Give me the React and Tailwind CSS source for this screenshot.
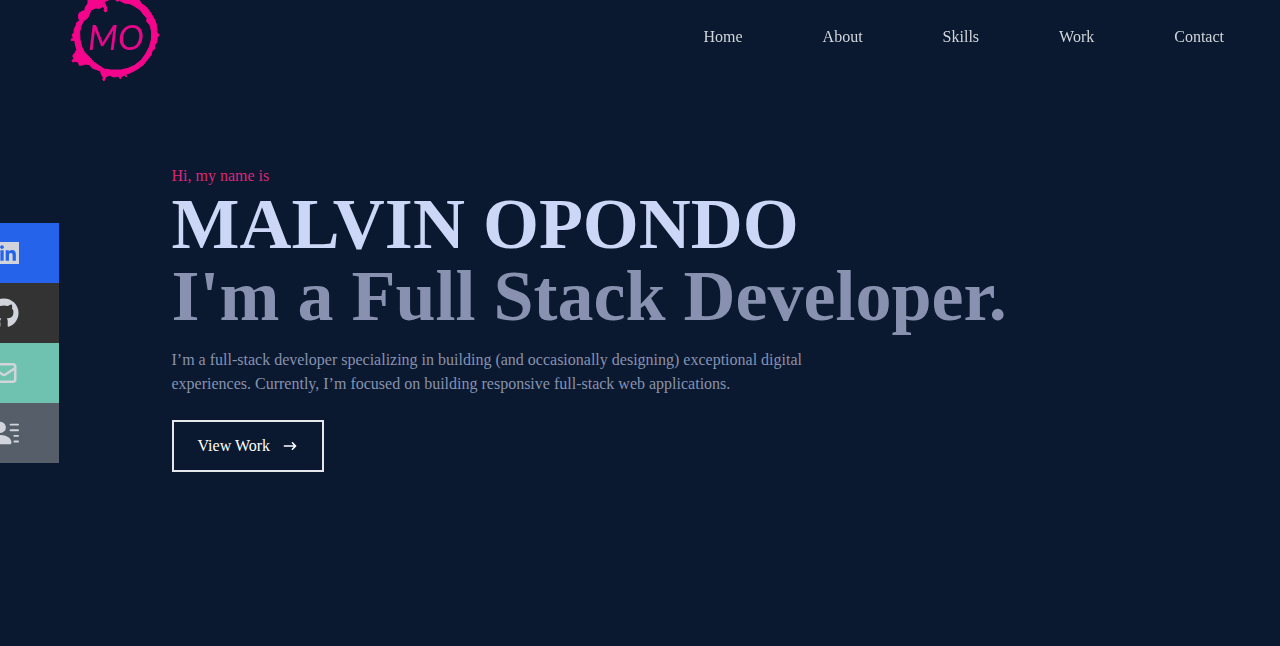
import { FaGithub } from "react-icons/fa";
import { HiArrowNarrowRight, HiOutlineMail } from "react-icons/hi";
import { BsFillPersonLinesFill } from "react-icons/bs";

const links = ["Home", "About", "Skills", "Work", "Contact"];

function LinkedInIcon({ className }) {
  return (
    <svg viewBox="0 0 448 512" fill="currentColor" className={className} aria-hidden="true">
      <path d="M0 32H448V480H0Zm135.4 384V202.2H69V416h66.5zm-33.2-243c21.3 0 38.5-17.2 38.5-38.5 0-21.2-17.3-38.5-38.5-38.5-21.3 0-38.5 17.3-38.5 38.5s17.2 38.5 38.5 38.5zm282.1 243V298.8c0-57.6-12.5-101.9-79.7-101.9-32.3 0-54 17.7-62.9 34.5h-.9v-29.2h-63.7V416h66.4V310.2c0-27.9 5.3-54.9 39.9-54.9 34 0 34.5 31.9 34.5 56.7v104h66.4z" />
    </svg>
  );
}

const socials = [
  { label: "LinkedIn", Icon: LinkedInIcon, color: "bg-[#2563eb]", size: "h-[30px] w-[22px]" },
  { label: "GitHub", Icon: FaGithub, color: "bg-[#333333]", size: "size-[30px]" },
  { label: "Email", Icon: HiOutlineMail, color: "bg-[#6fc2b0]", size: "size-[30px]" },
  { label: "Resume", Icon: BsFillPersonLinesFill, color: "bg-[#565f69]", size: "size-[30px]" },
];

function Logo() {
  return (
    <svg viewBox="0 -26 330 270" className="h-[90px] w-[110px]" role="img" aria-label="MO">
      <path
        fill="#f5058c"
        stroke="#f5058c"
        strokeWidth="3"
        strokeLinejoin="round"
        fillRule="evenodd"
        d="M84 -8 L100 -20 L150 -30 L200 -26 L236 -4 L245 10 L258 18 L270 34 L280 50 L288 68 L291 88 L290 94 L298 103 L292 110 L290 126 L284 133 L283 146 L277 149 L273 163 L262 177 L250 192 L236 203 L222 211 L208 218 L198 220 L199 229 L193 223 L184 228 L181 235 L176 227 L160 229 L150 224 L140 227 L136 232 L132 241 L128 237 L130 231 L124 221 L122 212 L111 207 L98 203 L88 192 L77 190 L68 193 L58 194 L55 185 L47 182 L38 184 L36 180 L42 173 L38 166 L46 155 L50 147 L46 130 L44 119 L34 120 L33 116 L40 111 L36 103 L42 96 L43 84 L48 76 L50 66 L59 60 L55 50 L57 38 L66 32 L74 30 L76 20 L84 8 Z
           M150 -4 L132 4 L137 13 L141 25 L138 34 L132 31 L134 22 L128 18 L119 23 L106 22 L92 29 L88 42 L82 53 L70 61 L63 76 L59 94 L60 118 L65 138 L73 154 L87 168 L101 184 L116 194 L132 205 L152 208 L182 208 L204 203 L224 194 L243 179 L257 160 L268 139 L274 117 L275 94 L270 73 L260 62 L261 53 L252 43 L240 27 L224 17 L210 9 L193 7 L178 -1 L173 2 L164 -4 Z"
      />
      <text
        x="84"
        y="148"
        fill="#e6078a"
        className="font-['Lato',sans-serif] text-[104px] italic"
      >
        MO
      </text>
    </svg>
  );
}

export default function App() {
  return (
    <div className="flex min-h-screen flex-col bg-[#0a192f] pr-px pb-0.5 font-['Liberation_Serif',serif] text-base text-[#d1d5db]">
      <header className="fixed inset-x-0 top-0 flex h-[74px] items-center justify-between pr-4 pl-[60px]">
        <a href="#home" className="block">
          <Logo />
        </a>
        <nav>
          <ul className="flex">
            {links.map((link) => (
              <li key={link} className="px-10">
                <a href={"#" + link.toLowerCase()}>{link}</a>
              </li>
            ))}
          </ul>
        </nav>
      </header>

      <aside className="fixed top-[223px] left-0">
        <ul>
          {socials.map(({ label, Icon, color, size }) => (
            <li key={label}>
              <a
                href={"#" + label.toLowerCase()}
                aria-label={label}
                className={"-ml-[101px] flex h-[60px] w-40 items-center justify-end pr-10 " + color}
              >
                <Icon className={size} />
              </a>
            </li>
          ))}
        </ul>
      </aside>

      <main className="mx-auto flex w-full max-w-[1000px] grow flex-col items-start justify-center px-8">
        <p className="text-[#db2777]">Hi, my name is</p>
        <h1 className="text-7xl leading-none font-bold text-[#ccd6f6]">MALVIN OPONDO</h1>
        <h2 className="text-7xl leading-none font-bold text-[#8892b0]">I'm a Full Stack Developer.</h2>
        <p className="max-w-[700px] py-4 text-[#8892b0]">
          I’m a full-stack developer specializing in building (and occasionally designing) exceptional
          digital experiences. Currently, I’m focused on building responsive full-stack web applications.
        </p>
        <button
          type="button"
          className="my-2 flex items-center border-2 border-[#e5e7eb] px-6 py-3 text-white"
        >
          View Work
          <HiArrowNarrowRight className="ml-3" />
        </button>
      </main>
    </div>
  );
}
